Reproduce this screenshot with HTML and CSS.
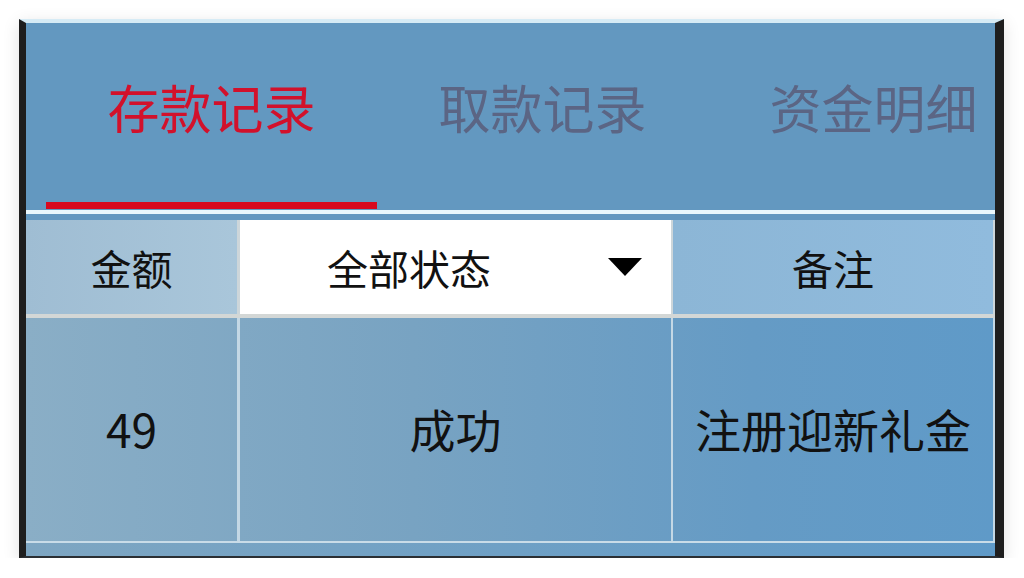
FILE: index.html
```html
<!DOCTYPE html>
<html lang="zh-CN">
<head>
  <meta charset="UTF-8" />
  <meta name="viewport" content="width=device-width, initial-scale=1.0"/>
  <title>存款记录</title>
  <link rel="stylesheet" href="styles.css">
</head>
<body>

  <div class="phone">
    <!-- tabs -->
    <div class="tabs">
      <div class="tab active">存款记录</div>
      <div class="tab">取款记录</div>
      <div class="tab">资金明细</div>
    </div>
    <div class="rule"></div>

    <!-- records -->
    <div class="table">
      <div class="row head">
        <div class="cell col-amount">金额</div>
        <div class="cell col-status select">
          <span>全部状态</span>
          <svg class="caret" width="34" height="18" viewBox="0 0 34 18"><path d="M0 0 L34 0 L17 18 Z" fill="#000"/></svg>
        </div>
        <div class="cell col-note">备注</div>
      </div>
      <div class="row body">
        <div class="cell col-amount">49</div>
        <div class="cell col-status">成功</div>
        <div class="cell col-note">注册迎新礼金</div>
      </div>
      <div class="foot"></div>
    </div>
  </div>

</body>
</html>
```

FILE: styles.css
```css
* {
  box-sizing: border-box;
}

body {
  margin: 0;
  background: #fff;
  font-family: "Noto Sans CJK SC", "Noto Sans", sans-serif;
}

.phone {
  margin: 19px 0 0 19px;
  width: 985px;
  height: 539px;
  background: #6398c0;
  border-top: 4px solid #d6ebf5;
  border-left: 7px solid #1e1e1e;
  border-right: 9px solid #1e1e1e;
  border-bottom: 2px solid #2b2f33;
  box-shadow: 0 4px 16px rgba(0, 0, 0, 0.12);
  overflow: hidden;
}

.tabs {
  display: flex;
  height: 187px;
  padding-left: 20px;
  overflow: hidden;
}

.tab {
  flex: 0 0 331px;
  height: 186px;
  margin-bottom: 1px;
  display: flex;
  align-items: center;
  justify-content: center;
  font-size: 52px;
  color: #5b6584;
  border-bottom: 7px solid transparent;
  padding: 2px 0 14px;
}

.tab.active {
  color: #d2112b;
  border-bottom-color: #d8091f;
}

.rule {
  height: 4px;
  background: #e9f7fc;
  margin-bottom: 6px;
}

.row {
  display: flex;
}

.cell {
  display: flex;
  align-items: center;
  justify-content: center;
  color: #111;
}

.col-amount {
  width: 211px;
}

.col-status {
  width: 434px;
  border-left: 3px solid #cdd6da;
}

.col-note {
  width: 324px;
  border-left: 2px solid #cdd6da;
  border-right: 2px solid #cdd6da;
}

.head {
  height: 98px;
  border-bottom: 4px solid #d3d7d6;
  font-size: 41px;
}

.head .col-amount {
  background: linear-gradient(90deg, #9fbdd3, #a9c6da);
}

.head .col-note {
  background: linear-gradient(90deg, #8cb6d6, #90bbdd);
}

.select {
  background: #fff;
  padding-right: 29px;
}

.select span {
  flex: 1;
  text-align: center;
  margin-right: 30px;
}

.body {
  height: 225px;
  border-bottom: 2px solid #c9dce8;
  font-size: 46px;
  background: linear-gradient(90deg, #8aaec6 0%, #78a3c2 40%, #659bc5 75%, #5f9ac8 100%);
}

.body .cell {
  padding-bottom: 4px;
}

.body .col-status,
.body .col-note {
  border-color: #c4d8e5;
}

.foot {
  height: 13px;
  background: linear-gradient(90deg, #7ea6c2, #5f9ac8);
}
```
